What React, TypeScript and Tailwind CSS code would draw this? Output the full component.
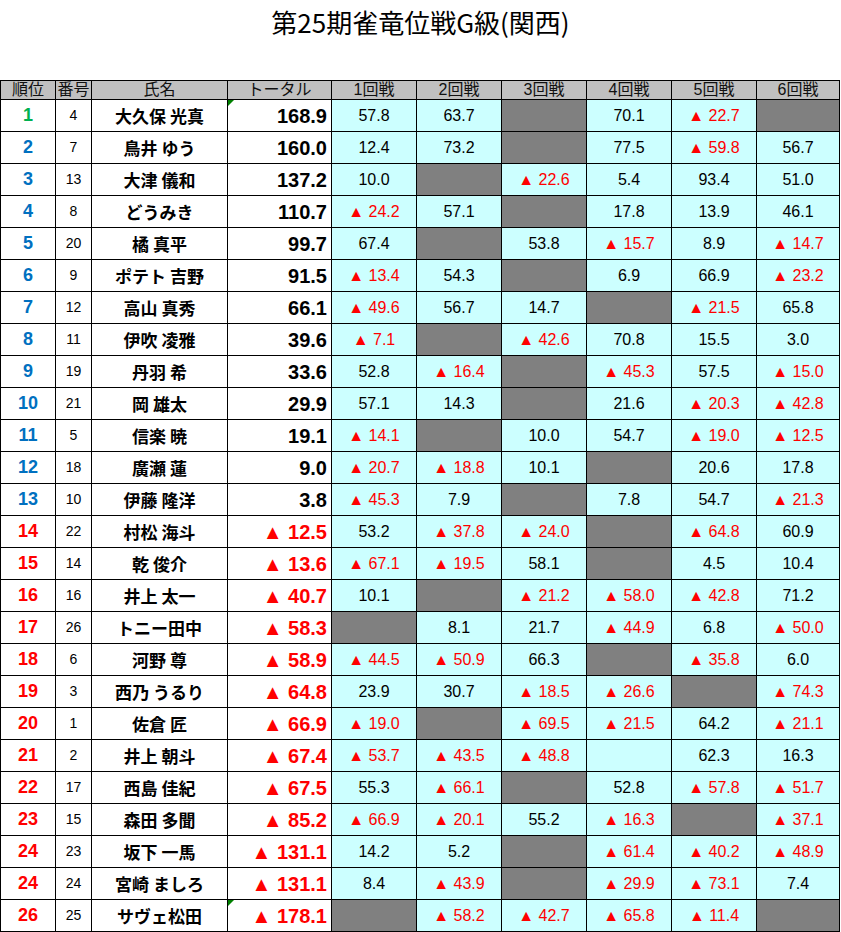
type Row = {
  rank: number;
  no: number;
  name: string;
  total: number;
  games: (number | null | "")[];
  mark?: boolean;
};

// null = 不参加（グレー）, "" = 空欄
const rows: Row[] = [
  { rank: 1, no: 4, name: "大久保 光真", total: 168.9, games: [57.8, 63.7, null, 70.1, -22.7, null], mark: true },
  { rank: 2, no: 7, name: "鳥井 ゆう", total: 160.0, games: [12.4, 73.2, null, 77.5, -59.8, 56.7] },
  { rank: 3, no: 13, name: "大津 儀和", total: 137.2, games: [10.0, null, -22.6, 5.4, 93.4, 51.0] },
  { rank: 4, no: 8, name: "どうみき", total: 110.7, games: [-24.2, 57.1, null, 17.8, 13.9, 46.1] },
  { rank: 5, no: 20, name: "橘 真平", total: 99.7, games: [67.4, null, 53.8, -15.7, 8.9, -14.7] },
  { rank: 6, no: 9, name: "ポテト 吉野", total: 91.5, games: [-13.4, 54.3, null, 6.9, 66.9, -23.2] },
  { rank: 7, no: 12, name: "高山 真秀", total: 66.1, games: [-49.6, 56.7, 14.7, null, -21.5, 65.8] },
  { rank: 8, no: 11, name: "伊吹 凌雅", total: 39.6, games: [-7.1, null, -42.6, 70.8, 15.5, 3.0] },
  { rank: 9, no: 19, name: "丹羽 希", total: 33.6, games: [52.8, -16.4, null, -45.3, 57.5, -15.0] },
  { rank: 10, no: 21, name: "岡 雄太", total: 29.9, games: [57.1, 14.3, null, 21.6, -20.3, -42.8] },
  { rank: 11, no: 5, name: "信楽 暁", total: 19.1, games: [-14.1, null, 10.0, 54.7, -19.0, -12.5] },
  { rank: 12, no: 18, name: "廣瀬 蓮", total: 9.0, games: [-20.7, -18.8, 10.1, null, 20.6, 17.8] },
  { rank: 13, no: 10, name: "伊藤 隆洋", total: 3.8, games: [-45.3, 7.9, null, 7.8, 54.7, -21.3] },
  { rank: 14, no: 22, name: "村松 海斗", total: -12.5, games: [53.2, -37.8, -24.0, null, -64.8, 60.9] },
  { rank: 15, no: 14, name: "乾 俊介", total: -13.6, games: [-67.1, -19.5, 58.1, null, 4.5, 10.4] },
  { rank: 16, no: 16, name: "井上 太一", total: -40.7, games: [10.1, null, -21.2, -58.0, -42.8, 71.2] },
  { rank: 17, no: 26, name: "トニー田中", total: -58.3, games: [null, 8.1, 21.7, -44.9, 6.8, -50.0] },
  { rank: 18, no: 6, name: "河野 尊", total: -58.9, games: [-44.5, -50.9, 66.3, null, -35.8, 6.0] },
  { rank: 19, no: 3, name: "西乃 うるり", total: -64.8, games: [23.9, 30.7, -18.5, -26.6, null, -74.3] },
  { rank: 20, no: 1, name: "佐倉 匠", total: -66.9, games: [-19.0, null, -69.5, -21.5, 64.2, -21.1] },
  { rank: 21, no: 2, name: "井上 朝斗", total: -67.4, games: [-53.7, -43.5, -48.8, "", 62.3, 16.3] },
  { rank: 22, no: 17, name: "西島 佳紀", total: -67.5, games: [55.3, -66.1, null, 52.8, -57.8, -51.7] },
  { rank: 23, no: 15, name: "森田 多聞", total: -85.2, games: [-66.9, -20.1, 55.2, -16.3, null, -37.1] },
  { rank: 24, no: 23, name: "坂下 一馬", total: -131.1, games: [14.2, 5.2, null, -61.4, -40.2, -48.9] },
  { rank: 24, no: 24, name: "宮崎 ましろ", total: -131.1, games: [8.4, -43.9, null, -29.9, -73.1, 7.4] },
  { rank: 26, no: 25, name: "サヴェ松田", total: -178.1, games: [null, -58.2, -42.7, -65.8, -11.4, null], mark: true },
];

const headers = ["順位", "番号", "氏名", "トータル", "1回戦", "2回戦", "3回戦", "4回戦", "5回戦", "6回戦"];

const fmt = (v: number) => (v < 0 ? `▲ ${Math.abs(v).toFixed(1)}` : v.toFixed(1));

const rankColor = (r: number) => {
  if (r === 1) return "text-[#00b050]";
  if (r <= 13) return "text-[#0070c0]";
  return "text-[#ff0000]";
};

export default function App() {
  return (
    <div className="w-[841px] h-[932px] bg-white font-['Liberation_Sans','Noto_Sans_CJK_JP',sans-serif] text-black">
      <div className="h-[80px] flex justify-center pt-[6px]">
        <h1 className="text-[26px] leading-[32px] font-normal font-['Noto_Sans_CJK_JP',sans-serif]">
          第25期雀竜位戦G級(関西)
        </h1>
      </div>

      <div className="w-[840px] grid grid-cols-[54px_35px_135px_103px_84px_84px_84px_84px_84px_82px] grid-rows-[18px_repeat(26,31px)] gap-px bg-black p-px">
        {headers.map((h) => (
          <div
            key={h}
            className="bg-[#c0c0c0] flex items-center justify-center text-[16px] leading-none font-['Liberation_Sans','Noto_Sans_CJK_JP',sans-serif] font-normal text-[#111]"
          >
            {h}
          </div>
        ))}

        {rows.map((r, i) => (
          <div key={i} className="contents">
            <div className={`bg-white flex items-center justify-center text-[18px] font-bold ${rankColor(r.rank)}`}>
              {r.rank}
            </div>
            <div className="bg-white flex items-center justify-center text-[14px]">{r.no}</div>
            <div className="bg-white flex items-center justify-center text-[17px] font-bold font-['Noto_Sans_CJK_JP',sans-serif]">
              {r.name}
            </div>
            <div
              className={`relative bg-white flex items-center justify-end pr-[4px] text-[20px] font-bold ${
                r.total < 0 ? "text-[#ff0000]" : "text-black"
              }`}
            >
              {r.mark && (
                <span className="absolute top-0 left-0 w-0 h-0 border-t-[6px] border-r-[6px] border-t-[#008000] border-r-transparent" />
              )}
              {fmt(r.total)}
            </div>
            {r.games.map((g, j) =>
              g === null ? (
                <div key={j} className="bg-[#808080]" />
              ) : (
                <div
                  key={j}
                  className={`bg-[#ccffff] flex items-center justify-center text-[16px] ${
                    typeof g === "number" && g < 0 ? "text-[#ff0000]" : "text-black"
                  }`}
                >
                  {typeof g === "number" ? fmt(g) : ""}
                </div>
              )
            )}
          </div>
        ))}
      </div>
    </div>
  );
}
